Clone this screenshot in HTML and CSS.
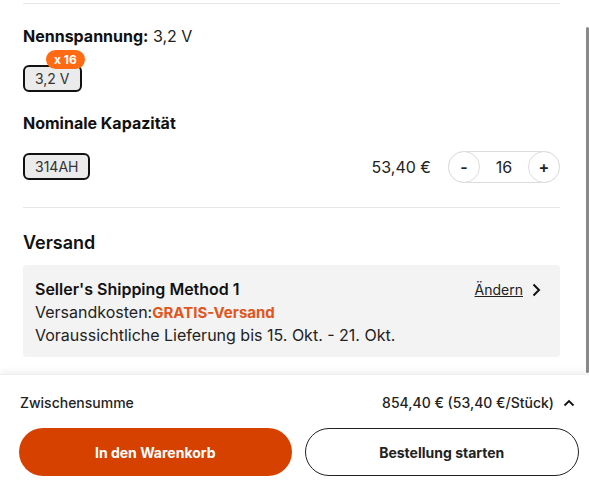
FILE: index.html
```html
<!DOCTYPE html>
<html lang="de">
<head>
<meta charset="utf-8">
<link rel="stylesheet" href="styles.css">
</head>
<body>
<div class="page">
  <div class="scroll">
    <main class="content">
      <hr class="divider top">
      <section class="attr">
        <h3 class="attr-title"><b>Nennspannung:</b> 3,2 V</h3>
        <div class="chips">
          <span class="chip">3,2 V<span class="badge">x 16</span></span>
        </div>
      </section>
      <section class="attr">
        <h3 class="attr-title"><b>Nominale Kapazität</b></h3>
        <div class="chips row">
          <span class="chip">314AH</span>
          <div class="price-qty">
            <span class="price">53,40 €</span>
            <div class="stepper">
              <button class="step">-</button>
              <span class="qty">16</span>
              <button class="step">+</button>
            </div>
          </div>
        </div>
      </section>
      <hr class="divider">
      <section class="shipping">
        <h2 class="ship-title">Versand</h2>
        <div class="ship-box">
          <div class="ship-head">
            <span class="ship-name">Seller's Shipping Method 1</span>
            <a class="change">Ändern
              <svg width="10" height="14" viewBox="0 0 10 14"><path d="M2.5 1.5 L8 7 L2.5 12.5" fill="none" stroke="#111" stroke-width="2"/></svg>
            </a>
          </div>
          <div class="ship-line">Versandkosten:<span class="free">GRATIS-Versand</span></div>
          <div class="ship-line">Voraussichtliche Lieferung bis 15. Okt. - 21. Okt.</div>
        </div>
      </section>
    </main>
    <div class="scrollbar"></div>
  </div>
  <footer class="footer">
    <div class="subtotal">
      <span class="sub-label">Zwischensumme</span>
      <span class="sub-value">854,40 € (53,40 €/Stück)
        <svg width="12" height="8" viewBox="0 0 12 8"><path d="M1.5 6.5 L6 2 L10.5 6.5" fill="none" stroke="#111" stroke-width="1.8"/></svg>
      </span>
    </div>
    <div class="actions">
      <button class="btn primary">In den Warenkorb</button>
      <button class="btn outline">Bestellung starten</button>
    </div>
  </footer>
</div>
</body>
</html>
```
FILE: styles.css
```css
* { box-sizing: border-box; }
html, body { margin: 0; padding: 0; background: #fff; }
body {
  font-family: Inter, "Noto Sans", "Liberation Sans", sans-serif;
  color: #111;
  width: 589px;
  height: 490px;
  overflow: hidden;
}
.page { display: flex; flex-direction: column; height: 490px; }
.scroll {
  height: 374px;
  display: flex;
  position: relative;
}
.content {
  width: 560px;
  padding-left: 23px;
}
.scrollbar {
  position: absolute;
  right: 0;
  top: 27px;
  width: 3px;
  height: 346px;
  background: #8a8a8a;
  border-radius: 2px;
}
.divider {
  border: 0;
  border-top: 1px solid #e6e6e6;
  margin: 0;
}
.divider.top { margin-top: 3px; }
.attr-title {
  font-size: 16px;
  font-weight: 400;
  margin: 0;
  line-height: 20px;
  color: #222;
}
.attr-title b { font-weight: 700; color: #111; }
.attr:first-of-type .attr-title { margin-top: 22px; }
.attr + .attr .attr-title { margin-top: 21px; }
.chips { display: flex; align-items: center; }
.attr:first-of-type .chips { margin-top: 19px; }
.attr + .attr .chips { margin-top: 17px; }
.row { justify-content: space-between; }
.chip {
  position: relative;
  display: inline-flex;
  align-items: center;
  height: 27px;
  padding: 0 10px;
  border: 2px solid #111;
  border-radius: 6px;
  background: #ebebeb;
  font-size: 14px;
  color: #333;
  white-space: nowrap;
}
.badge {
  position: absolute;
  left: 21px;
  top: -17px;
  height: 19px;
  padding: 0 8px;
  border-radius: 10px;
  background: #ff6a13;
  color: #fff;
  font-size: 12px;
  font-weight: 700;
  display: flex;
  align-items: center;
  white-space: nowrap;
}
.price-qty { display: flex; align-items: center; gap: 17px; margin-top: 1px; }
.price { font-size: 16px; color: #222; }
.stepper {
  width: 112px;
  height: 32px;
  border: 1px solid #dcdcdc;
  border-radius: 16px;
  display: flex;
  align-items: center;
  justify-content: space-between;
}
.step {
  width: 32px;
  height: 32px;
  margin: -1px;
  border: 1px solid #dcdcdc;
  border-radius: 50%;
  background: #fff;
  font-family: inherit;
  font-size: 16px;
  font-weight: 600;
  color: #222;
  padding: 0;
}
.qty { font-size: 16px; color: #222; }
.attr + .divider { margin-top: 24px; }
.ship-title {
  font-size: 18px;
  font-weight: 600;
  margin: 24px 0 0;
  line-height: 22px;
}
.ship-box {
  margin-top: 11px;
  background: #f3f3f3;
  border-radius: 4px;
  padding: 13px 12px 10px;
  font-size: 16px;
  line-height: 23px;
  color: #222;
}
.ship-head { display: flex; justify-content: space-between; align-items: center; }
.ship-name { font-weight: 600; color: #111; }
.change {
  font-size: 14px;
  text-decoration: underline;
  color: #222;
  display: flex;
  align-items: center;
  gap: 8px;
  margin-right: 7px;
}
.free { color: #e0561b; font-weight: 700; font-size: 15px; }
.footer {
  flex: 1;
  box-shadow: 0 -3px 6px rgba(0,0,0,0.06);
  border-top: 1px solid #eeeeee;
  padding: 0 10px 0 19px;
  position: relative;
}
.subtotal {
  display: flex;
  justify-content: space-between;
  align-items: center;
  margin-top: 19px;
  font-size: 14px;
  font-weight: 500;
  color: #222;
}
.sub-label { margin-left: 1px; }
.sub-value { display: flex; align-items: center; gap: 9px; margin-right: 4px; }
.actions { display: flex; gap: 13px; margin-top: 17px; }
.btn {
  flex: 1;
  height: 48px;
  border-radius: 24px;
  font-family: inherit;
  font-size: 14px;
  font-weight: 700;
}
.primary { background: #d64100; border: 0; color: #fff; }
.outline { background: #fff; border: 1px solid #222; color: #222; }
```
